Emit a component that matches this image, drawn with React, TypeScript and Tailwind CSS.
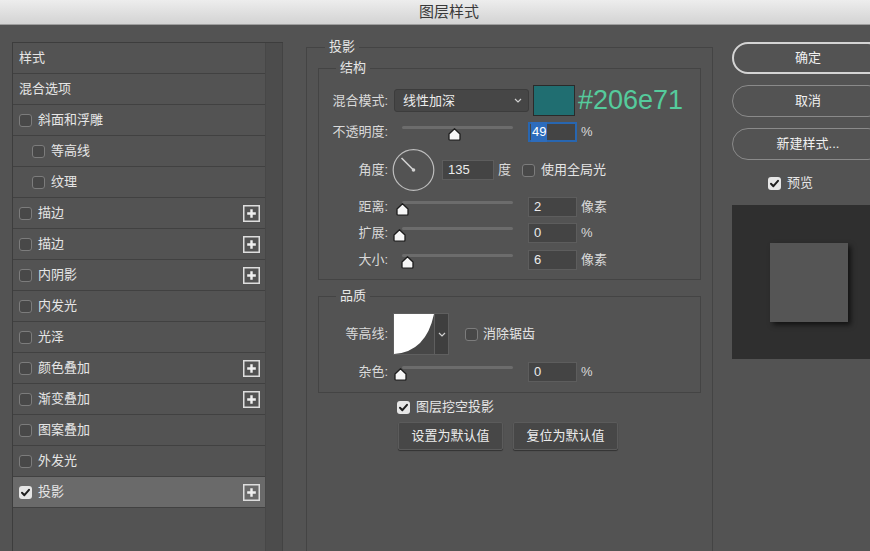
import React from 'react';

const Check: React.FC<{ on?: boolean }> = ({ on }) =>
    on ? (
        <span className="w-[13px] h-[13px] rounded-[3px] bg-[#e6e6e6] flex items-center justify-center shrink-0">
            <svg width="11" height="11" viewBox="0 0 11 11">
                <path d="M2 5.8 L4.4 8.2 L9 2.8" stroke="#1e1e1e" strokeWidth="2" fill="none" strokeLinecap="round" strokeLinejoin="round" />
            </svg>
        </span>
    ) : (
        <span className="w-[13px] h-[13px] rounded-[3px] border border-[#7c7c7c] bg-[#484848] shrink-0" />
    );

const PlusBox: React.FC = () => (
    <svg width="17" height="17" viewBox="0 0 17 17" className="shrink-0">
        <rect x="0.75" y="0.75" width="15.5" height="15.5" fill="none" stroke="#dedede" strokeWidth="1.5" />
        <path d="M8.5 4.2 V12.8 M4.2 8.5 H12.8" stroke="#f0f0f0" strokeWidth="2.4" />
    </svg>
);

const Chevron: React.FC = () => (
    <svg width="8" height="5" viewBox="0 0 8 5">
        <path d="M1 1 L4 4 L7 1" stroke="#d0d0d0" strokeWidth="1.2" fill="none" />
    </svg>
);

type Item = { label: string; check?: boolean; indent?: boolean; plus?: boolean; on?: boolean; active?: boolean };

const items: Item[] = [
    { label: '样式' },
    { label: '混合选项' },
    { label: '斜面和浮雕', check: true },
    { label: '等高线', check: true, indent: true },
    { label: '纹理', check: true, indent: true },
    { label: '描边', check: true, plus: true },
    { label: '描边', check: true, plus: true },
    { label: '内阴影', check: true, plus: true },
    { label: '内发光', check: true },
    { label: '光泽', check: true },
    { label: '颜色叠加', check: true, plus: true },
    { label: '渐变叠加', check: true, plus: true },
    { label: '图案叠加', check: true },
    { label: '外发光', check: true },
    { label: '投影', check: true, plus: true, on: true, active: true },
];

const Slider: React.FC<{ thumb: string }> = ({ thumb }) => (
    <div className="relative w-[111px] h-[20px] shrink-0">
        <div className="absolute top-[4px] left-0 right-0 h-[3px] rounded bg-[#6c6c6c]" />
        <svg width="13" height="13" viewBox="0 0 13 13" className={`absolute top-[6px] ${thumb}`}>
            <path d="M6.5 0.8 L12 6 L12 11 Q12 12.2 10.8 12.2 L2.2 12.2 Q1 12.2 1 11 L1 6 Z" fill="#f6f6f6" stroke="#1c1c1c" strokeWidth="1.3" strokeLinejoin="round" />
        </svg>
    </div>
);

const Field: React.FC<{ value: string; w?: string }> = ({ value, w = 'w-[49px]' }) => (
    <div className={`${w} h-[20px] bg-[#444] border border-[#5d5d5d] flex items-center pl-[5px] text-[13px] text-[#ececec] shrink-0`}>
        {value}
    </div>
);

const Label: React.FC<{ children: React.ReactNode }> = ({ children }) => (
    <span className="w-[69px] text-right text-[13px] text-[#dadada] shrink-0">{children}</span>
);

const SliderRow: React.FC<{ label: string; thumb: string; value: string; unit: string; mt: string }> = ({ label, thumb, value, unit, mt }) => (
    <div className={`${mt} h-[20px] flex items-center`}>
        <Label>{label}</Label>
        <div className="ml-[14px]">
            <Slider thumb={thumb} />
        </div>
        <div className="ml-[15px]">
            <Field value={value} />
        </div>
        <span className="ml-[4px] text-[13px] text-[#dadada]">{unit}</span>
    </div>
);

export default function App() {
    return (
        <div className="w-[870px] h-[551px] overflow-hidden bg-[#535353] flex flex-col font-['Liberation_Sans','Noto_Sans_CJK_SC',sans-serif]">
            <div className="h-[25px] shrink-0 bg-gradient-to-b from-[#ededed] to-[#d3d3d3] border-b border-[#9e9e9e] flex items-center justify-center pl-[28px] text-[15px] text-[#3a3a3a]">
                图层样式
            </div>

            <div className="flex flex-1 min-h-0 overflow-hidden">
                {/* style list */}
                <div className="ml-[12px] mt-[17px] flex shrink-0 border-l border-t border-[#3d3d3d] h-[520px]">
                    <div className="w-[252px] flex flex-col">
                        {items.map((it, i) => (
                            <div
                                key={i}
                                className={`h-[31px] shrink-0 border-b border-[#414141] flex items-center pr-[5px] text-[13px] text-[#e6e6e6] ${it.indent ? 'pl-[19px]' : 'pl-[6px]'} ${it.active ? 'bg-[#6a6a6a]' : 'bg-[#535353]'}`}
                            >
                                {it.check && <Check on={it.on} />}
                                <span className={it.check ? 'ml-[6px]' : ''}>{it.label}</span>
                                {it.plus && (
                                    <span className="ml-auto flex">
                                        <PlusBox />
                                    </span>
                                )}
                            </div>
                        ))}
                    </div>
                    <div className="w-[18px] bg-[#4c4c4c] border-l border-[#474747] border-r border-r-[#434343]" />
                </div>

                {/* drop shadow settings */}
                <fieldset className="ml-[23px] mt-[13px] w-[407px] h-[540px] shrink-0 border border-[#444] px-[11px]">
                    <legend className="ml-[7px] px-[4px] text-[13px] leading-[18px] text-[#e6e6e6]">投影</legend>

                    <fieldset className="mt-[3px] border border-[#444] pb-[9px]">
                        <legend className="ml-[17px] px-[4px] text-[13px] leading-[18px] text-[#e6e6e6]">结构</legend>

                        <div className="mt-[8px] h-[31px] flex items-center">
                            <Label>混合模式:</Label>
                            <div className="ml-[6px] w-[135px] h-[23px] rounded-[3px] bg-[#464646] border border-[#3c3c3c] flex items-center pl-[8px] pr-[6px] text-[13px] text-[#ececec]">
                                线性加深
                                <span className="ml-auto flex">
                                    <Chevron />
                                </span>
                            </div>
                            <div className="ml-[4px] w-[42px] h-[31px] bg-[#206e71] border border-[#2a2a2a]" />
                            <span className="ml-[3px] text-[27px] leading-none text-[#55cb9c]">#206e71</span>
                        </div>

                        <div className="mt-[6px] h-[20px] flex items-center">
                            <Label>不透明度:</Label>
                            <div className="ml-[14px]">
                                <Slider thumb="left-[46px]" />
                            </div>
                            <div className="ml-[15px] w-[49px] h-[20px] bg-[#444] border-2 border-[#2866b0] flex items-center pl-[1px] text-[13px]">
                                <span className="bg-[#2d6cbc] text-white px-[1px]">49</span>
                            </div>
                            <span className="ml-[4px] text-[13px] text-[#dadada]">%</span>
                        </div>

                        <div className="mt-[7px] h-[42px] flex items-center">
                            <Label>角度:</Label>
                            <svg width="43" height="42" viewBox="0 0 43 42" className="ml-[4px] shrink-0">
                                <circle cx="21.5" cy="21" r="20.3" fill="none" stroke="#bdbdbd" strokeWidth="1.2" />
                                <path d="M9.5 9 L21 20.5" stroke="#d2d2d2" strokeWidth="1.6" />
                                <circle cx="21.5" cy="21" r="1.8" fill="#d2d2d2" />
                            </svg>
                            <div className="ml-[7px]">
                                <Field value="135" w="w-[52px]" />
                            </div>
                            <span className="ml-[4px] text-[13px] text-[#dadada]">度</span>
                            <span className="ml-[11px] flex">
                                <Check />
                            </span>
                            <span className="ml-[6px] text-[13px] text-[#e4e4e4]">使用全局光</span>
                        </div>

                        <SliderRow mt="mt-[6px]" label="距离:" thumb="-left-[6px]" value="2" unit="像素" />
                        <SliderRow mt="mt-[6px]" label="扩展:" thumb="-left-[9px]" value="0" unit="%" />
                        <SliderRow mt="mt-[7px]" label="大小:" thumb="-left-[1px]" value="6" unit="像素" />
                    </fieldset>

                    <fieldset className="mt-[7px] border border-[#444] pb-[10px]">
                        <legend className="ml-[17px] px-[4px] text-[13px] leading-[18px] text-[#e6e6e6]">品质</legend>

                        <div className="mt-[8px] h-[42px] flex items-center">
                            <Label>等高线:</Label>
                            <div className="ml-[5px] w-[56px] h-[42px] flex border border-[#5f5f5f] shrink-0">
                                <svg width="40" height="40" viewBox="0 0 40 40" className="shrink-0">
                                    <rect width="40" height="40" fill="#ffffff" />
                                    <path d="M0 40 Q32 38 40 0 L40 40 Z" fill="#474747" />
                                </svg>
                                <div className="flex-1 bg-[#3f3f3f] border-l border-[#5f5f5f] flex items-center justify-center">
                                    <Chevron />
                                </div>
                            </div>
                            <span className="ml-[16px] flex">
                                <Check />
                            </span>
                            <span className="ml-[5px] text-[13px] text-[#e4e4e4]">消除锯齿</span>
                        </div>

                        <SliderRow mt="mt-[7px]" label="杂色:" thumb="-left-[8px]" value="0" unit="%" />
                    </fieldset>

                    <div className="mt-[7px] h-[14px] flex items-center pl-[79px]">
                        <Check on />
                        <span className="ml-[6px] text-[13px] text-[#e6e6e6]">图层挖空投影</span>
                    </div>

                    <div className="mt-[8px] pl-[80px] flex gap-[10px]">
                        <button className="w-[105px] h-[28px] bg-[#474747] border border-[#5b5b5b] rounded-[2px] text-[13px] text-[#ececec] shadow-[0_1px_1px_rgba(0,0,0,0.4)]">
                            设置为默认值
                        </button>
                        <button className="w-[105px] h-[28px] bg-[#474747] border border-[#5b5b5b] rounded-[2px] text-[13px] text-[#ececec] shadow-[0_1px_1px_rgba(0,0,0,0.4)]">
                            复位为默认值
                        </button>
                    </div>
                </fieldset>

                {/* actions + preview */}
                <div className="ml-[19px] pt-[17px] w-[160px] shrink-0 flex flex-col">
                    <button className="w-[152px] h-[32px] rounded-full border-2 border-[#d4d4d4] text-[13px] text-[#f0f0f0]">确定</button>
                    <button className="mt-[11px] w-[152px] h-[32px] rounded-full border border-[#8a8a8a] text-[13px] text-[#f0f0f0]">取消</button>
                    <button className="mt-[11px] w-[152px] h-[32px] rounded-full border border-[#8a8a8a] text-[13px] text-[#f0f0f0]">新建样式...</button>
                    <div className="mt-[16px] h-[14px] flex items-center pl-[36px]">
                        <Check on />
                        <span className="ml-[6px] text-[13px] text-[#e6e6e6]">预览</span>
                    </div>
                    <div className="mt-[15px] w-[154px] h-[154px] bg-[#2f2f2f] flex items-center justify-center">
                        <div className="w-[78px] h-[79px] bg-[#555] shadow-[3px_3px_5px_rgba(0,0,0,0.6)]" />
                    </div>
                </div>
            </div>
        </div>
    );
}
